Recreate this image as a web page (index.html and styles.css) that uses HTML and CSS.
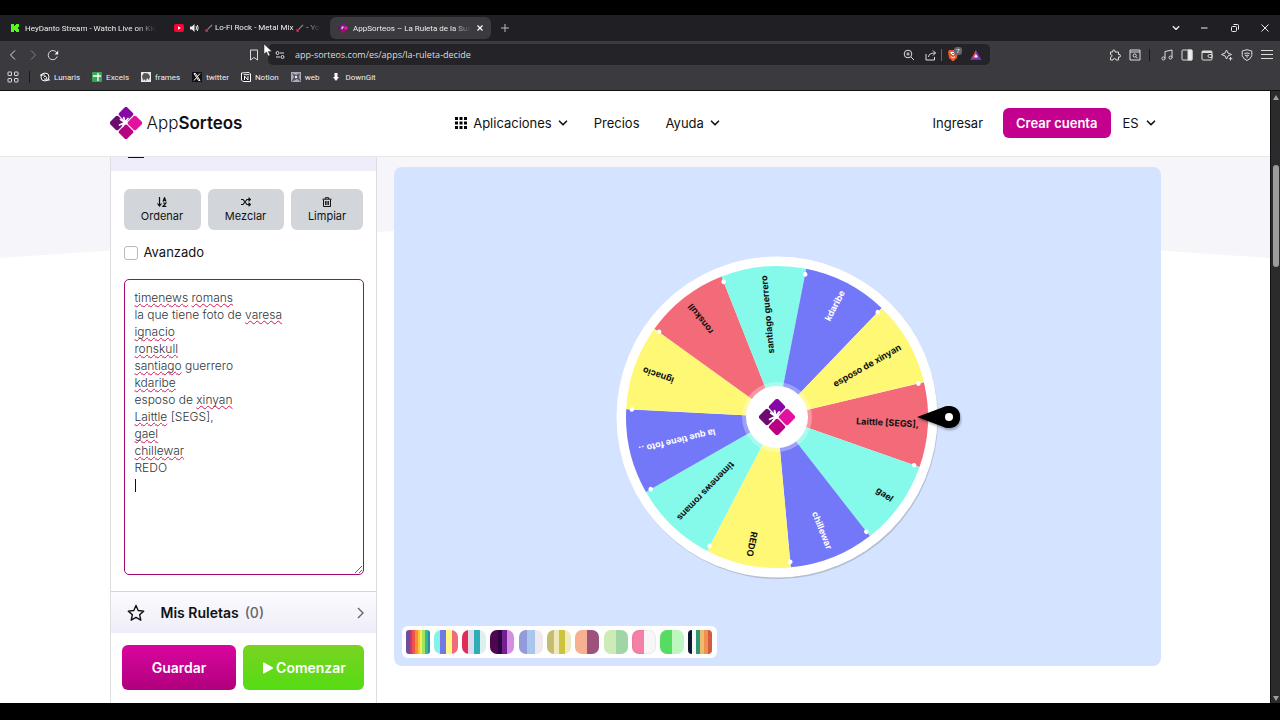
FILE: index.html
```html
<!DOCTYPE html>
<html lang="es">
<head>
  <meta charset="UTF-8">
  <meta name="viewport" content="width=device-width, initial-scale=1.0">
  <title>AppSorteos – La Ruleta de la Suerte</title>
  <link rel="stylesheet" href="styles.css">
</head>
<body>
  <!-- Shared icons -->
  <svg class="defs" width="0" height="0" aria-hidden="true">
    <symbol id="logo" viewBox="0 0 32 32">
      <g transform="rotate(45 16 16)">
        <rect x="4" y="4" width="11.400" height="11.400" rx="2" fill="#8607a3"/>
        <rect x="16.600" y="4" width="11.400" height="11.400" rx="2" fill="#e3119d"/>
        <rect x="4" y="16.600" width="11.400" height="11.400" rx="2" fill="#6d0c70"/>
        <rect x="16.600" y="16.600" width="11.400" height="11.400" rx="2" fill="#b80083"/>
      </g>
      <path d="M15 15.500 9.500 18M15 15.500 10.500 12.500M15 15.500 13.800 10.500M15 15.500 18 11.500M15 15.500 12.500 19.500" stroke="#fff" stroke-width="1.700" stroke-linecap="round"/>
    </symbol>
    <symbol id="chevron" viewBox="0 0 10 10"><path d="M1.5 3.2 5 6.8 8.5 3.2" fill="none" stroke="currentColor" stroke-width="1.6" stroke-linecap="round" stroke-linejoin="round"/></symbol>
    <symbol id="guitar" viewBox="0 0 10 10">
      <path d="M4.5 5.5 9 1" stroke="#9b8a90" stroke-width="1.2"/>
      <path d="M1.2 6.4Q2.3 5.4 3.2 5.5 4 4.4 4.8 5.2 5.7 6 4.6 6.9 4.6 9 2.9 9.2 1 9 1.2 6.4Z" fill="#c02c52"/>
    </symbol>
  </svg>

  <div class="tabs">
    <div class="tab">
      <svg class="icon-10" viewBox="0 0 10 10"><path d="M1 1h3v2h1V2h1V1h3v3H8v2h1v3H6V8H5V7H4v2H1Z" fill="#53fc18"/></svg>
      <span class="tab-title">HeyDanto Stream - Watch Live on Kick</span>
    </div>
    <div class="tab">
      <svg class="icon-10" viewBox="0 0 10 10"><rect y="1" width="10" height="8" rx="2" fill="#f03"/><path d="M4 3.2 7 5 4 6.800Z" fill="#fff"/></svg>
      <svg class="icon-10" viewBox="0 0 10 10"><path d="M1 3.5h2L5.500 1v8L3 6.500H1Z" fill="#eee"/><path d="M7 3Q8 5 7 7M8.300 2Q10 5 8.300 8" fill="none" stroke="#eee"/></svg>
      <span class="tab-title"><svg class="icon-9"><use href="#guitar"/></svg> Lo-Fi Rock - Metal Mix <svg class="icon-9"><use href="#guitar"/></svg> - YouTube</span>
    </div>
    <div class="tab active">
      <svg class="icon-10"><use href="#logo"/></svg>
      <span class="tab-title">AppSorteos – La Ruleta de la Suerte</span>
      <button class="chrome-btn" aria-label="Cerrar pestaña"><svg class="icon-8" viewBox="0 0 8 8"><path d="M1.500 1.500l5 5M6.500 1.500l-5 5" stroke="#fff" stroke-width="1.200"/></svg></button>
    </div>
    <button class="chrome-btn new-tab" aria-label="Nueva pestaña"><svg class="icon-10" viewBox="0 0 10 10"><path d="M5 1v8M1 5h8" stroke="#bbb"/></svg></button>
    <div class="window-buttons">
      <button class="chrome-btn" aria-label="Buscar pestañas"><svg class="icon-8"><use href="#chevron"/></svg></button>
      <button class="chrome-btn" aria-label="Minimizar"><svg class="icon-10" viewBox="0 0 10 10"><path d="M1 5h6.500" stroke="#eee"/></svg></button>
      <button class="chrome-btn" aria-label="Restaurar"><svg class="icon-10" viewBox="0 0 10 10"><rect x="1.500" y="3.500" width="5" height="5" rx="1" fill="none" stroke="#eee"/><path d="M3.500 1.500h4q1 0 1 1v4" fill="none" stroke="#eee"/></svg></button>
      <button class="chrome-btn" aria-label="Cerrar"><svg class="icon-10" viewBox="0 0 10 10"><path d="M1.500 1.500l7 7M8.500 1.500l-7 7" stroke="#eee"/></svg></button>
    </div>
  </div>

  <div class="toolbar">
    <button class="chrome-btn" aria-label="Atrás"><svg class="icon-12" viewBox="0 0 12 12"><path d="M8 1.500 3.500 6 8 10.500"/></svg></button>
    <button class="chrome-btn dim" aria-label="Adelante"><svg class="icon-12" viewBox="0 0 12 12"><path d="M4 1.500 8.500 6 4 10.500"/></svg></button>
    <button class="chrome-btn" aria-label="Recargar"><svg class="icon-12" viewBox="0 0 12 12"><path d="M10.200 7.500A4.600 4.600 0 1 1 10 4.200"/><path d="M11.200 1.500v4H7.500Z" fill="#eee" stroke="none"/></svg></button>
    <button class="chrome-btn bookmark" aria-label="Guardar marcador"><svg class="icon-12" viewBox="0 0 12 12"><path d="M2.500 1h7v10L6 8.500 2.500 11Z"/></svg></button>
    <div class="address">
      <svg class="icon-10" viewBox="0 0 10 10"><circle cx="2.500" cy="3" r="1.500"/><path d="M5 3h4M1 7h4"/><circle cx="7.500" cy="7" r="1.500"/></svg>
      <input type="text" class="url" aria-label="Dirección" value="app-sorteos.com/es/apps/la-ruleta-decide">
      <button class="chrome-btn" aria-label="Zoom"><svg class="icon-12" viewBox="0 0 12 12"><circle cx="5" cy="5" r="3.800"/><path d="M8 8l3 3M5 3.300v3.400M3.300 5h3.400"/></svg></button>
      <button class="chrome-btn share" aria-label="Compartir"><svg class="icon-12" viewBox="0 0 12 12"><path d="M1 5v6h8.500V8M3.500 8Q3.500 4 10.500 4M8 1.500 10.500 4 8 6.500"/></svg></button>
      <span class="divider"></span>
      <button class="chrome-btn" aria-label="Escudos"><svg class="icon-16" viewBox="0 0 16 16"><path d="M3 3h8l1 2-1 6-4 3.500L3 11 2 5Z" fill="#f1562b" stroke="none"/><path d="M4.500 5.500h5L7 8ZM5 9.500l2 1.500 2-1.500" stroke="#fff"/><rect x="8" y="0" width="8" height="8" rx="3" fill="#666670" stroke="none"/><text x="12" y="6" class="badge">7</text></svg></button>
      <button class="chrome-btn" aria-label="Recompensas"><svg class="icon-12" viewBox="0 0 12 12"><path d="M6 1 11.500 11H6Z" fill="#8b2fa5" stroke="none"/><path d="M6 1 .5 11H6Z" fill="#f0464b" stroke="none"/><path d="M.5 11 4 8h4l3.500 3Z" fill="#6a37b9" stroke="none"/><path d="M6 5 8 8.500H4Z" fill="#fff" stroke="none"/></svg></button>
    </div>
    <div class="extensions">
      <button class="chrome-btn" aria-label="Extensiones"><svg class="icon-12" viewBox="0 0 12 12"><path d="M1.500 3h2.200Q3 1 4.800 1T6 3h3.500v2.500Q11.500 5 11.500 6.800T9.500 8v3H7Q7 9.500 5.500 9.500T4 11H1.500V8.200Q3 8 3 6.800T1.500 5.500Z"/></svg></button>
      <button class="chrome-btn" aria-label="Buscar"><svg class="icon-12" viewBox="0 0 12 12"><path d="M1 1h10v10H1ZM1 3h10"/><circle cx="5.700" cy="6.500" r="1.600"/><path d="M7 7.800 8.500 9.300"/></svg></button>
      <span class="divider"></span>
      <button class="chrome-btn" aria-label="Música"><svg class="icon-12" viewBox="0 0 12 12"><path d="M4 9.500V2.500L11 1v7.500"/><circle cx="2.500" cy="9.500" r="1.500"/><circle cx="9.500" cy="8.500" r="1.500"/></svg></button>
      <button class="chrome-btn" aria-label="Panel lateral"><svg class="icon-12" viewBox="0 0 12 12"><rect x="1" y="1" width="10" height="10" rx="1"/><path d="M7 1h4v10H7Z" fill="#eee"/></svg></button>
      <button class="chrome-btn" aria-label="Cartera"><svg class="icon-12" viewBox="0 0 12 12"><rect x="1" y="2" width="10" height="9" rx="1"/><path d="M1 3h10" stroke-width="2"/><path d="M11 5.500H8.500a1.500 1.500 0 0 0 0 3H11Z"/></svg></button>
      <button class="chrome-btn" aria-label="Asistente"><svg class="icon-12" viewBox="0 0 12 12"><path d="M5.500 1Q6 5 10.500 5.500 6 6 5.500 10 5 6 .5 5.500 5 5 5.500 1ZM9.500 8v3.500M7.800 9.700h3.500"/></svg></button>
      <button class="chrome-btn" aria-label="VPN"><svg class="icon-12" viewBox="0 0 12 12"><path d="M6 .7 10.800 2v4.500Q10 10 6 11.500 2 10 1.200 6.500V2Z"/><path d="M3.300 4.700q2.700-1.500 5.400 0M4 6.700q2-1.200 4 0M6 7v1.800"/></svg></button>
      <button class="chrome-btn" aria-label="Menú"><svg class="icon-12" viewBox="0 0 12 12"><path d="M0 1.500h12M0 5.500h12M0 9.500h12"/></svg></button>
    </div>
    <svg class="cursor" viewBox="0 0 10 14"><path d="M1 1v10l2.500-2 1.800 4 1.700-.8L5.300 8.500H9Z" fill="#fff" stroke="#222" stroke-width=".5"/></svg>
  </div>

  <div class="bookmarks">
    <svg class="icon-12" viewBox="0 0 12 12"><g fill="none" stroke="#ddd"><rect x="1" y="1" width="3.500" height="3.500" rx=".5"/><rect x="7.500" y="1" width="3.500" height="3.500" rx=".5"/><rect x="1" y="7.500" width="3.500" height="3.500" rx=".5"/><rect x="7.500" y="7.500" width="3.500" height="3.500" rx=".5"/></g></svg>
    <span class="divider"></span>
    <a href="#"><svg class="icon-10" viewBox="0 0 10 10"><circle cx="5" cy="5" r="4" fill="#222" stroke="#fff"/><path d="M0 3h5M5 8h5M3.500 5.500Q5 2.500 6.500 5T4 7" fill="none" stroke="#fff"/></svg>Lunaris</a>
    <a href="#"><svg class="icon-10" viewBox="0 0 10 10"><rect width="10" height="10" rx="1" fill="#3aa653"/><path d="M6 1v8M1 4h8" stroke="#fff" stroke-width="1.300"/></svg>Excels</a>
    <a href="#"><svg class="icon-10" viewBox="0 0 10 10"><rect width="10" height="10" fill="#e9e9e9"/><path d="M1 4 3 1l4 .5L9 4 8 8 6 6 5 9 3 7 2 9Z" fill="#555"/></svg>frames</a>
    <a href="#"><svg class="icon-10" viewBox="0 0 10 10"><rect width="10" height="10" fill="#111"/><path d="M2 1.500h1.500l4.500 7H6.500ZM8 1.500 2 8.500" fill="none" stroke="#fff"/></svg>twitter</a>
    <a href="#"><svg class="icon-10" viewBox="0 0 10 10"><path d="M.500 1 8 .500 9.500 2v7.500H2L.500 8Z" fill="#222" stroke="#fff"/><path d="M3.500 8V4l3.500 4V4M2.500 2.700h6" fill="none" stroke="#fff"/></svg>Notion</a>
    <a href="#"><svg class="icon-10" viewBox="0 0 10 10"><rect width="10" height="10" fill="#aab"/><path d="M0 10 3 5 1 1l4 2 4-2-1 4 2 5-4-3Z" fill="#555563"/><circle cx="5" cy="5" r="1.200" fill="#eee"/></svg>web</a>
    <a href="#"><svg class="icon-10" viewBox="0 0 10 10"><path d="M3.500 1h3v4H8L5 9 2 5h1.500Z" fill="#fff"/></svg>DownGit</a>
  </div>

  <div class="page">
    <div class="content">
      <header>
        <div class="wrap header-row">
          <a class="brand" href="#"><svg class="brand-logo"><use href="#logo"/></svg><span>App<b>Sorteos</b></span></a>
          <nav>
            <button class="nav-link apps">
              <svg class="icon-12" viewBox="0 0 12 12"><path d="M0 0h3v3H0ZM4.500 0h3v3h-3ZM9 0h3v3H9ZM0 4.500h3v3H0ZM4.500 4.500h3v3h-3ZM9 4.500h3v3H9ZM0 9h3v3H0ZM4.500 9h3v3h-3ZM9 9h3v3H9Z"/></svg>
              Aplicaciones <svg class="icon-10"><use href="#chevron"/></svg>
            </button>
            <a class="nav-link" href="#">Precios</a>
            <button class="nav-link">Ayuda <svg class="icon-10"><use href="#chevron"/></svg></button>
          </nav>
          <div class="account">
            <a class="nav-link" href="#">Ingresar</a>
            <a class="signup" href="#">Crear cuenta</a>
            <label class="language">
              <select aria-label="Idioma"><option>ES</option><option>EN</option></select>
              <svg class="icon-10"><use href="#chevron"/></svg>
            </label>
          </div>
        </div>
      </header>

      <main>
        <div class="wrap columns">
          <aside>
            <div class="section-title entries-title">
              <svg class="icon-18" viewBox="0 0 18 18"><path d="M2 2h5q2 0 2 2 0-2 2-2h5v14h-5q-2 0-2 1 0-1-2-1H2ZM9 4v12" fill="none" stroke="currentColor" stroke-width="2"/></svg>
            </div>
            <div class="entries">
              <div class="tools">
                <button><svg class="icon-10" viewBox="0 0 10 10"><path d="M2.500 0v8M.5 6.500l2 2.500 2-2.500M6 4.500 7.500.7 9 4.500M6.300 3.300h2.400M6 6h3L6 9.300h3.300" fill="none" stroke="currentColor" stroke-width="1.200"/></svg>Ordenar</button>
                <button><svg class="icon-10" viewBox="0 0 10 10"><path d="M0 2.500h2l4 5h3M0 7.500h2l4-5h3M7.500.700l2 1.800-2 1.800M7.500 5.700l2 1.800-2 1.800" fill="none" stroke="currentColor" stroke-width="1.200"/></svg>Mezclar</button>
                <button><svg class="icon-10" viewBox="0 0 10 10"><path d="M.5 2.200h9M3.300 2V.7h3.400V2M1.500 2.500v7h7v-7M3.600 4v4M5 4v4M6.400 4v4" fill="none" stroke="currentColor"/></svg>Limpiar</button>
              </div>
              <label class="advanced"><input type="checkbox"> Avanzado</label>
              <div class="editor">
                <div class="spelling" aria-hidden="true"><u>timenews</u> <u>romans</u>
la que tiene foto de <u>varesa</u>
<u>ignacio</u>
<u>ronskull</u>
<u>santiago</u> guerrero
<u>kdaribe</u>
esposo de <u>xinyan</u>
<u>Laittle</u> [SEGS],
<u>gael</u>
<u>chillewar</u>
REDO
<span class="caret"></span></div>
                <textarea aria-label="Participantes" spellcheck="false">timenews romans
la que tiene foto de varesa
ignacio
ronskull
santiago guerrero
kdaribe
esposo de xinyan
Laittle [SEGS],
gael
chillewar
REDO
</textarea>
              </div>
            </div>
            <button class="section-title saved">
              <svg class="icon-18" viewBox="0 0 18 18"><path d="M9 1.500 11.200 6.500 16.700 7.100 12.600 10.700 13.800 16.200 9 13.400 4.200 16.200 5.400 10.700 1.300 7.100 6.800 6.500Z" fill="none" stroke="currentColor" stroke-width="1.400" stroke-linejoin="round"/></svg>
              <span>Mis Ruletas</span> <span class="count">(0)</span>
              <svg class="icon-12 arrow" viewBox="0 0 12 12"><path d="M4 1 9 6 4 11" fill="none" stroke="#666" stroke-width="1.400"/></svg>
            </button>
            <div class="actions">
              <button class="save">Guardar</button>
              <button class="start"><svg class="icon-12" viewBox="0 0 12 12"><path d="M1 1.500Q1 0 2.500.800L10.500 5.200Q12 6 10.500 6.800L2.500 11.200Q1 12 1 10.500Z" fill="#fff"/></svg>Comenzar</button>
            </div>
          </aside>

          <section class="stage">
            <svg class="wheel" viewBox="-190 -170 380 340">
              <defs>
                <path id="slice" d="M0 0 144.900 -42.500A151 151 0 0 1 144.900 42.500Z"/>
                <circle id="pin" cx="139.500" cy="41" r="2.300" fill="#fff"/>
              </defs>
              <circle class="rim-shadow" cx="1" cy="2" r="160"/>
              <circle r="160.500" fill="#fff"/>
              <g transform="rotate(3)"><use href="#slice" class="red"/><text x="142" y="3">Laittle [SEGS],</text></g>
              <g transform="rotate(35.700)"><use href="#slice" class="aqua"/><text x="142" y="3">gael</text></g>
              <g transform="rotate(68.400)"><use href="#slice" class="blue"/><text x="142" y="3" class="light">chillewar</text></g>
              <g transform="rotate(101.200)"><use href="#slice" class="yellow"/><text x="142" y="3">REDO</text></g>
              <g transform="rotate(133.900)"><use href="#slice" class="aqua"/><text x="142" y="3">timenews romans</text></g>
              <g transform="rotate(166.600)"><use href="#slice" class="blue"/><text x="142" y="3" class="light">la que tiene foto ..</text></g>
              <g transform="rotate(199.400)"><use href="#slice" class="yellow"/><text x="142" y="3">ignacio</text></g>
              <g transform="rotate(232.100)"><use href="#slice" class="red"/><text x="142" y="3">ronskull</text></g>
              <g transform="rotate(264.800)"><use href="#slice" class="aqua"/><text x="142" y="3">santiago guerrero</text></g>
              <g transform="rotate(297.500)"><use href="#slice" class="blue"/><text x="142" y="3" class="light">kdaribe</text></g>
              <g transform="rotate(330.300)"><use href="#slice" class="yellow"/><text x="142" y="3">esposo de xinyan</text></g>
              <use href="#pin" transform="rotate(3)"/>
              <use href="#pin" transform="rotate(35.700)"/>
              <use href="#pin" transform="rotate(68.400)"/>
              <use href="#pin" transform="rotate(101.200)"/>
              <use href="#pin" transform="rotate(133.900)"/>
              <use href="#pin" transform="rotate(166.600)"/>
              <use href="#pin" transform="rotate(199.400)"/>
              <use href="#pin" transform="rotate(232.100)"/>
              <use href="#pin" transform="rotate(264.800)"/>
              <use href="#pin" transform="rotate(297.500)"/>
              <use href="#pin" transform="rotate(330.300)"/>
              <circle r="35" fill="#fff" opacity=".3"/>
              <circle r="31" fill="#fff"/>
              <use href="#logo" x="-18" y="-18" width="36" height="36"/>
              <g class="pointer"><path d="M140 0 168 -10.500Q183 -12 183 0T168 10.500Z"/><circle cx="172" r="11"/></g>
              <circle cx="172" r="4" fill="#fff"/>
            </svg>
            <div class="palettes">
              <button class="palette rainbow" aria-label="Arcoíris"></button>
              <button class="palette pop" aria-label="Pop"></button>
              <button class="palette circus" aria-label="Circo"></button>
              <button class="palette violet" aria-label="Violeta"></button>
              <button class="palette sky" aria-label="Cielo"></button>
              <button class="palette olive" aria-label="Oliva"></button>
              <button class="palette peach" aria-label="Durazno"></button>
              <button class="palette mint" aria-label="Menta"></button>
              <button class="palette pink" aria-label="Rosa"></button>
              <button class="palette green" aria-label="Verde"></button>
              <button class="palette retro" aria-label="Retro"></button>
            </div>
          </section>
        </div>
      </main>
    </div>
    <div class="scrollbar"><span class="up"></span><span class="thumb"></span><span class="down"></span></div>
  </div>
</body>
</html>
```
FILE: styles.css
```css
* {
  box-sizing: border-box;
}

body {
  display: flex;
  flex-direction: column;
  height: 100vh;
  margin: 0;
  padding: 15px 0 17px;
  overflow: hidden;
  background-color: #000;
  font-family: Inter, "Liberation Sans", sans-serif;
  font-size: 13px;
  color: #111;
}

button,
input,
select,
textarea {
  font-family: inherit;
}

button {
  border: none;
  cursor: pointer;
}

a {
  color: inherit;
  text-decoration: none;
}

svg {
  flex: none;
}

.defs {
  position: absolute;
}

.icon-8 { width: 8px; height: 8px; }
.icon-9 { width: 9px; height: 9px; }
.icon-10 { width: 10px; height: 10px; }
.icon-12 { width: 12px; height: 12px; }
.icon-16 { width: 16px; height: 16px; }
.icon-18 { width: 18px; height: 18px; }

/* Browser */
.tabs,
.toolbar,
.bookmarks {
  display: flex;
  flex: none;
  align-items: center;
  font-family: Roboto, "Open Sans", sans-serif;
  font-size: 8px;
  color: #eee;
}

.tabs {
  height: 26px;
  gap: 3px;
  padding-left: 2px;
  background-color: #202024;
}

.tab {
  display: flex;
  flex: 0 1 161px;
  min-width: 0;
  align-items: center;
  gap: 5px;
  height: 22px;
  padding: 0 7px 0 8px;
  border-radius: 6px;
}

.tab.active {
  background-color: #3b3a3e;
}

.tab-title {
  flex: 1;
  overflow: hidden;
  white-space: nowrap;
  mask-image: linear-gradient(to right, #000 85%, transparent);
}

.tab-title svg {
  vertical-align: middle;
}

.chrome-btn {
  display: flex;
  align-items: center;
  justify-content: center;
  padding: 0;
  background: none;
  color: #eee;
}

.new-tab {
  margin-left: 6px;
}

.window-buttons {
  display: flex;
  gap: 20px;
  margin-left: auto;
  padding-right: 10px;
}

.toolbar {
  position: relative;
  height: 27px;
  gap: 8px;
  padding: 0 7px;
  background-color: #3b3a3e;
}

.toolbar svg {
  fill: none;
  stroke: #ddd;
}

.dim {
  opacity: 0.45;
}

.bookmark {
  margin-left: 181px;
}

.address {
  display: flex;
  flex: 1;
  align-items: center;
  gap: 8px;
  height: 21px;
  padding: 0 8px 0 7px;
  border-radius: 5px;
  background-color: #242428;
}

.url {
  flex: 1;
  min-width: 0;
  padding: 0 0 0 2px;
  border: none;
  background: none;
  color: #ddd;
  font-family: "Open Sans", "Noto Sans", sans-serif;
  font-size: 9px;
}

.share {
  margin: 0 -4px 0 2px;
}

.address .divider {
  margin-right: -4px;
  background-color: #666;
}

.toolbar .badge {
  fill: #fff;
  stroke: none;
  font-size: 6px;
  text-anchor: middle;
}

.divider {
  width: 1px;
  height: 12px;
  background-color: #19191c;
}

.extensions {
  display: flex;
  align-items: center;
  gap: 8px;
  margin-left: 111px;
}

.extensions .divider {
  margin-right: 3px;
}

.cursor {
  position: absolute;
  top: 2px;
  left: 263px;
  width: 10px;
  height: 14px;
}

.toolbar .cursor {
  stroke: none;
}

.bookmarks {
  height: 23px;
  gap: 12px;
  padding: 0 7px 4px;
  border-bottom: 1px solid #111;
  background-color: #3b3a3e;
}

.bookmarks a {
  display: flex;
  align-items: center;
  gap: 4px;
}

.bookmarks .divider {
  margin: 0 -2px;
}

/* Page */
.page {
  display: flex;
  flex: 1;
  min-height: 0;
  background-color: #fff;
}

.content {
  display: flex;
  flex: 1;
  flex-direction: column;
  min-width: 0;
}

.wrap {
  width: 100%;
  max-width: 1051px;
  margin: 0 auto;
}

header {
  flex: none;
  border-bottom: 1px solid #e8e8ea;
}

.header-row {
  display: flex;
  align-items: center;
  justify-content: space-between;
  height: 65px;
  padding: 0 5px 2px 0;
}

.brand {
  display: flex;
  align-items: center;
  gap: 5px;
  font-size: 17px;
  font-weight: 300;
}

.brand b {
  font-weight: 600;
}

.brand-logo {
  width: 32px;
  height: 32px;
}

nav {
  display: flex;
  align-items: center;
  gap: 26px;
}

.nav-link {
  display: flex;
  align-items: center;
  gap: 6px;
  padding: 0;
  background: none;
  color: #111;
  font-size: 13px;
}

.account {
  display: flex;
  align-items: center;
}

.signup {
  margin: 0 12px 0 20px;
  padding: 0 13px;
  border-radius: 6px;
  background-color: #c4008f;
  color: #fff;
  font-weight: 600;
  line-height: 30px;
}

.language {
  display: flex;
  align-items: center;
  gap: 5px;
}

.language select {
  padding: 0;
  border: none;
  appearance: none;
  background: none;
  color: #111;
  font-size: 13px;
}

main {
  position: relative;
  flex: 1;
  min-height: 0;
  overflow: hidden;
}

main::before {
  content: "";
  position: absolute;
  inset: 0 0 auto;
  height: 101px;
  background-color: #f6f5fa;
  clip-path: polygon(0 0, 100% 0, 100% 100%, 50% 57%, 0 100%);
}

.columns {
  position: relative;
  display: grid;
  grid-template-columns: 267px 1fr;
  gap: 17px;
  height: 100%;
}

aside {
  display: flex;
  flex-direction: column;
  margin-top: -28px;
  border: 1px solid #dddde2;
  border-width: 0 1px;
  background-color: #fff;
}

.section-title {
  display: flex;
  flex: none;
  align-items: center;
  gap: 16px;
  width: 100%;
  height: 42px;
  padding: 0 10px 0 16px;
  font-size: 14px;
  font-weight: 600;
  color: #111;
}

.entries-title {
  background-color: #efedf9;
}

.entries {
  display: flex;
  flex: 1;
  flex-direction: column;
  min-height: 0;
  padding: 18px 12px 16px 13px;
}

.tools {
  display: flex;
  gap: 7px;
}

.tools button {
  display: flex;
  flex: 1 1 auto;
  flex-direction: column;
  align-items: center;
  justify-content: center;
  gap: 3px;
  height: 41px;
  padding: 0 8px;
  border-radius: 6px;
  background-color: #d2d6da;
  color: #111;
  font-size: 11px;
  line-height: 13px;
}

.advanced {
  display: flex;
  align-items: center;
  gap: 6px;
  margin: 14px 0 18px;
  line-height: 17px;
}

.advanced input {
  width: 14px;
  height: 14px;
  margin: 0;
  border: 1px solid #b9b9be;
  border-radius: 3px;
  appearance: none;
}

/* The spelling marks sit under a textarea of the same metrics */
.editor {
  display: grid;
  flex: 1;
  min-height: 0;
}

.spelling,
.editor textarea {
  grid-area: 1 / 1;
  width: 100%;
  margin: 0;
  padding: 9px 10px;
  border: 1px solid transparent;
  font-size: 12px;
  font-weight: 300;
  line-height: 17px;
}

.spelling {
  color: transparent;
  white-space: pre-wrap;
}

.spelling u {
  text-decoration: underline wavy #d4145a 1px;
  text-decoration-skip-ink: none;
  text-underline-offset: 1px;
}

.caret {
  display: inline-block;
  width: 1px;
  height: 13px;
  background-color: #111;
  vertical-align: middle;
}

.editor textarea {
  border-color: #a3086f;
  border-radius: 5px;
  outline: none;
  background: none;
  color: #30363c;
}

.saved {
  border-top: 1px solid #d5d5da;
  background: linear-gradient(#fdfcff, #eeecf7);
}

.saved .count {
  margin-left: -10px;
  color: #666;
  font-weight: 500;
}

.saved .arrow {
  margin-left: auto;
}

.actions {
  display: grid;
  grid-template-columns: 19fr 20fr;
  gap: 7px;
  padding: 12px 11px 13px;
}

.actions button {
  display: flex;
  align-items: center;
  justify-content: center;
  gap: 2px;
  height: 45px;
  border-radius: 6px;
  color: #fff;
  font-size: 14px;
  font-weight: 600;
}

.save {
  background: linear-gradient(#d9059f, #b0007c);
}

.start {
  background: linear-gradient(#79d321, #55dc14);
}

.stage {
  display: grid;
  margin: 10px 0 37px;
  border-radius: 8px;
  background-color: #d4e3ff;
}

.wheel {
  grid-area: 1 / 1;
  place-self: center;
  width: 380px;
  height: 340px;
}

.wheel text {
  font-size: 9px;
  font-weight: 700;
  text-anchor: end;
  fill: #111;
}

.wheel .light {
  fill: #fff;
}

.rim-shadow {
  fill: #b4bed3;
}

.red { fill: #f36b79; }
.aqua { fill: #85f9ea; }
.blue { fill: #7378f8; }
.yellow { fill: #fef874; }

.pointer {
  filter: drop-shadow(1px 2px 1px rgba(0, 0, 0, 0.3));
}

.palettes {
  grid-area: 1 / 1;
  place-self: end start;
  display: flex;
  justify-content: space-between;
  width: 315px;
  margin: 8px;
  padding: 4px;
  border-radius: 6px;
  background-color: #fff;
}

.palette {
  width: 24px;
  height: 24px;
  padding: 0;
  border-radius: 7px;
}

.rainbow { background: linear-gradient(to right, #6b4ea0 18%, #c43a78 18% 27%, #ee5548 27% 36%, #f78f3b 36% 48%, #fbc63d 48% 58%, #f4ef5b 58% 68%, #a6e35d 68% 80%, #38b892 80% 90%, #2d8ba6 90%); border-radius: 3px; }
.pop { background: linear-gradient(to right, #85f1e9 25%, #7277e4 25% 50%, #fdf886 50% 75%, #ef6b77 75%); }
.circus { background: linear-gradient(to right, #e02d58 25%, #dcdcec 25% 50%, #2fadb4 50% 75%, #dcf0ee 75%); }
.violet { background: linear-gradient(to right, #50064f 33%, #2c0343 33% 50%, #74218f 50% 72%, #d68ce2 72%); }
.sky { background: linear-gradient(to right, #939bdb 33%, #a9c6ed 33% 66%, #efe9ed 66%); }
.olive { background: linear-gradient(to right, #c4bc71 28%, #efe8b9 28% 52%, #ccc43f 52% 75%, #f0eac0 75%); }
.peach { background: linear-gradient(to right, #f7b090 50%, #9c527c 50%); }
.mint { background: linear-gradient(to right, #cdebb5 50%, #a0d6a5 50%); }
.pink { background: linear-gradient(to right, #f57fa5 50%, #f8f6f8 50%); box-shadow: inset 0 0 0 1px rgba(0, 0, 0, 0.05); }
.green { background: linear-gradient(to right, #57dc62 50%, #bdf6bf 50%); }
.retro { background: linear-gradient(to right, #101a2e 17%, #f5faf7 17% 34%, #329676 34% 50%, #e8bd72 50% 66%, #f1914f 66% 83%, #d35b3e 83%); border-radius: 4px; }

.scrollbar {
  display: flex;
  flex: none;
  flex-direction: column;
  align-items: center;
  width: 10px;
  padding: 4px 0 2px;
  border-left: 1px solid #111;
  background-color: #2b2b2d;
}

.up,
.down {
  border: 3px solid transparent;
  border-top-width: 0;
  border-bottom: 5px solid #a0a0a0;
}

.down {
  margin-top: auto;
  transform: rotate(180deg);
}

.thumb {
  width: 6px;
  height: 102px;
  margin-top: 65px;
  border-radius: 3px;
  background-color: #9c9c9c;
}
```
